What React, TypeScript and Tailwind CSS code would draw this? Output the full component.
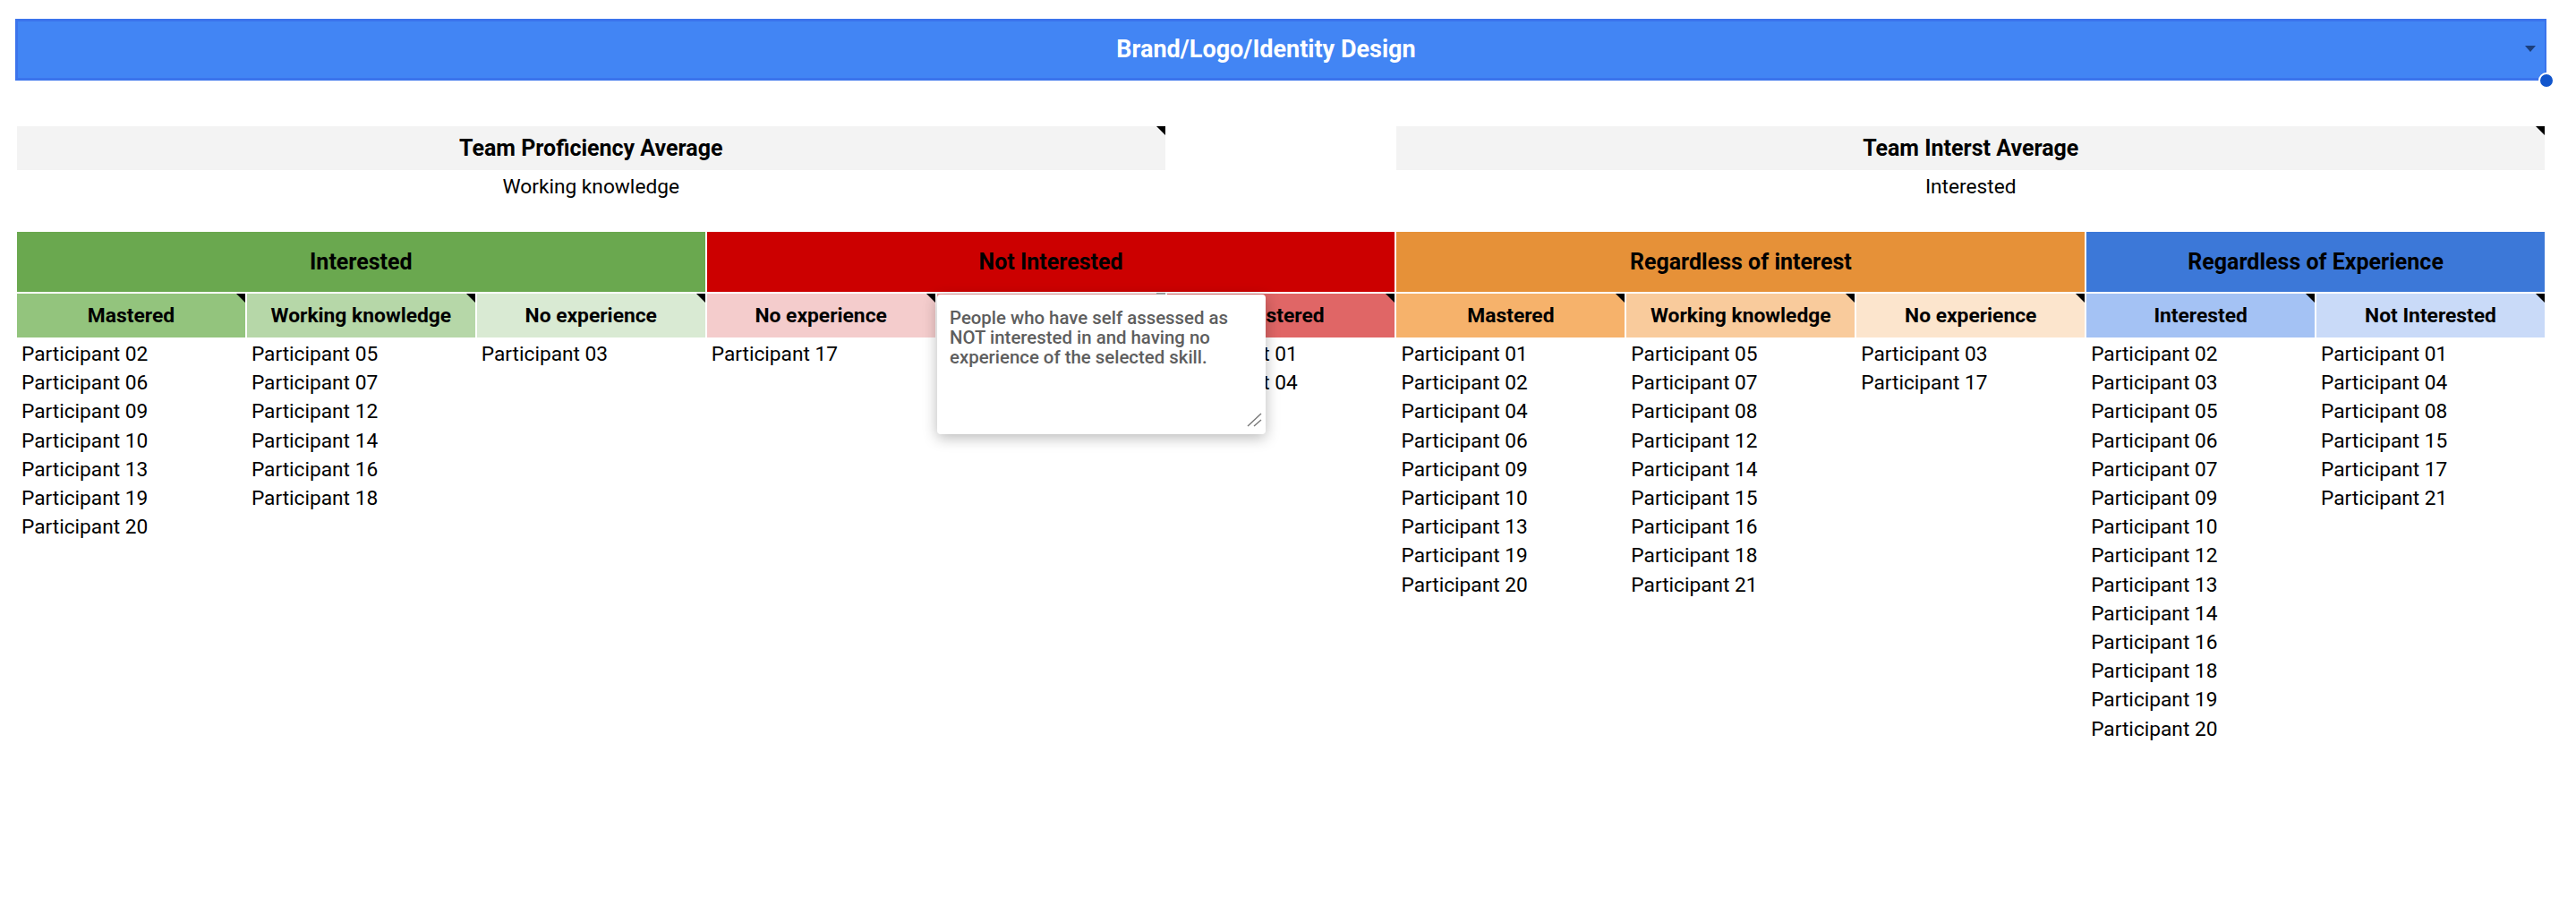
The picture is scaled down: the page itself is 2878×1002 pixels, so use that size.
const P = (nums: string[]) => nums.map((n) => `Participant ${n}`);

type Col = { label: string; bg: string; names: string[] };
type Group = { label: string; bg: string; span: string; cols: Col[] };

const groups: Group[] = [
  {
    label: "Interested",
    bg: "bg-[#6aa84f]",
    span: "col-span-3",
    cols: [
      { label: "Mastered", bg: "bg-[#93c47d]", names: P(["02", "06", "09", "10", "13", "19", "20"]) },
      { label: "Working knowledge", bg: "bg-[#b6d7a8]", names: P(["05", "07", "12", "14", "16", "18"]) },
      { label: "No experience", bg: "bg-[#d9ead3]", names: P(["03"]) },
    ],
  },
  {
    label: "Not Interested",
    bg: "bg-[#cc0000]",
    span: "col-span-3",
    cols: [
      { label: "No experience", bg: "bg-[#f4cccc]", names: P(["17"]) },
      { label: "", bg: "bg-[#ea9999]", names: [] },
      { label: "Mastered", bg: "bg-[#e06666]", names: P(["01", "04"]) },
    ],
  },
  {
    label: "Regardless of interest",
    bg: "bg-[#e69138]",
    span: "col-span-3",
    cols: [
      { label: "Mastered", bg: "bg-[#f6b26b]", names: P(["01", "02", "04", "06", "09", "10", "13", "19", "20"]) },
      { label: "Working knowledge", bg: "bg-[#f9cb9c]", names: P(["05", "07", "08", "12", "14", "15", "16", "18", "21"]) },
      { label: "No experience", bg: "bg-[#fce5cd]", names: P(["03", "17"]) },
    ],
  },
  {
    label: "Regardless of Experience",
    bg: "bg-[#3c78d8]",
    span: "col-span-2",
    cols: [
      { label: "Interested", bg: "bg-[#a4c2f4]", names: P(["02", "03", "05", "06", "07", "09", "10", "12", "13", "14", "16", "18", "19", "20"]) },
      { label: "Not Interested", bg: "bg-[#c9daf8]", names: P(["01", "04", "08", "15", "17", "21"]) },
    ],
  },
];

function Corner() {
  return <span className="absolute top-0 right-0 w-0 h-0 border-t-[10px] border-l-[10px] border-t-black border-l-transparent" />;
}

function Average({ title, value, start }: { title: string; value: string; start: string }) {
  return (
    <div className={`col-span-5 ${start}`}>
      <div className="relative h-[49px] bg-[#f3f3f3] flex items-center justify-center font-bold text-[25px]">
        {title}
        <Corner />
      </div>
      <div className="text-center pt-[3px] leading-[32px]">{value}</div>
    </div>
  );
}

export default function App() {
  const cols = groups.flatMap((g) => g.cols);
  return (
    <div className="min-h-[1002px] bg-white text-black font-['Roboto',sans-serif] text-[22.7px] pt-[21px]">
      <div className="relative ml-[17px] w-[2828px] h-[69px] border-[3px] border-r-2 border-[#3b74ec] bg-[#4285f4] flex items-center justify-center pr-[34px] text-white font-bold text-[27px]">
        Brand/Logo/Identity Design
        <span className="absolute right-[10px] top-[27px] w-0 h-0 border-x-[6.5px] border-t-[7px] border-x-transparent border-t-[#1c3f7c]" />
        <span className="absolute -right-[11px] -bottom-[12px] w-[18px] h-[18px] rounded-full bg-[#1155cc] border-2 border-white" />
      </div>

      <div className="ml-[19px] w-[2824px] mt-[51px] grid grid-cols-11 gap-x-[2px]">
        <Average title="Team Proficiency Average" value="Working knowledge" start="col-start-1" />
        <Average title="Team Interst Average" value="Interested" start="col-start-7" />
      </div>

      <div className="relative ml-[19px] w-[2824px] mt-[34px] grid grid-cols-11 gap-x-[2px]">
        {groups.map((g) => (
          <div key={g.label} className={`${g.span} ${g.bg} h-[67px] flex items-center justify-center font-bold text-[25px]`}>
            {g.label}
          </div>
        ))}
        {cols.map((c, i) => (
          <div key={i} className={`relative mt-[2px] h-[49px] ${c.bg} flex items-center justify-center pt-[2px] font-bold text-[22.8px]`}>
            {c.label}
            <Corner />
          </div>
        ))}
        {cols.map((c, i) => (
          <div key={i} className="pl-[5px] pt-[3px] leading-[32.2px]">
            {c.names.map((n) => (
              <div key={n}>{n}</div>
            ))}
          </div>
        ))}

        <div className="absolute left-[1273px] top-[68px] w-[10px] h-[2px] bg-[#a8a8a8]" />
        <div className="absolute left-[1028px] top-[70px] w-[367px] h-[156px] bg-white rounded-[4px] shadow-[0_4px_16px_rgba(0,0,0,0.28)] pl-[14px] pr-[10px] pt-[15px] text-[#5e5e5e] text-[20.4px] font-medium leading-[22px]">
          People who have self assessed as NOT interested in and having no experience of the selected skill.
          <svg className="absolute right-[3px] bottom-[6px] w-[18px] h-[18px]" viewBox="0 0 18 18" fill="none" stroke="#777" strokeWidth="1.4">
            <path d="M1 15 L16 1 M8 15 L16 8" />
          </svg>
        </div>
      </div>
    </div>
  );
}
